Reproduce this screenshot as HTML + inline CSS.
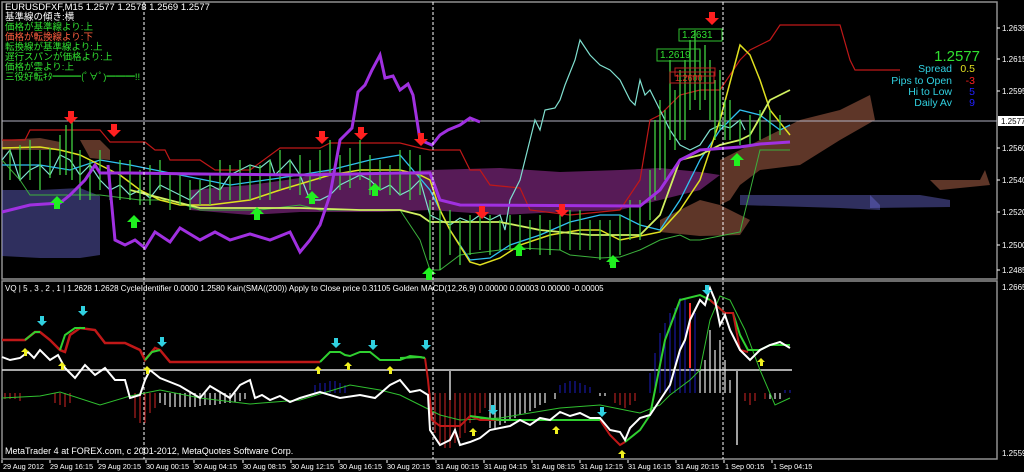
<!DOCTYPE html>
<html><head><meta charset="utf-8"><style>
html,body{margin:0;padding:0;background:#000;width:1024px;height:472px;overflow:hidden}
svg{display:block}
text{font-family:"Liberation Sans","Noto Sans CJK JP",sans-serif}
</style></head><body>
<svg width="1024" height="472" viewBox="0 0 1024 472" xmlns="http://www.w3.org/2000/svg">
<rect width="1024" height="472" fill="#000"/>
<rect x="2" y="2" width="995" height="277" fill="none" stroke="#909090" stroke-width="1.5"/>
<rect x="2" y="281" width="995" height="178" fill="none" stroke="#909090" stroke-width="1.5"/>
<g fill-opacity="0.42">
<path d="M2,190 L40,190 L80,188 L100,196 L100,255 L80,258 L40,258 L2,256 Z" fill="#7070e0"/>
<path d="M2,140 L40,138 L60,142 L60,150 L2,150 Z" fill="#e08060"/>
<path d="M80,140 L100,140 L110,150 L110,160 L90,158 Z" fill="#e08060"/>
<path d="M430,170 L500,168 L560,172 L620,170 L660,168 L700,172 L720,175 L700,190 L660,200 L620,210 L560,212 L500,215 L430,210 Z" fill="#d040d0"/>
<path d="M190,190 L250,185 L300,178 L330,170 L350,175 L400,172 L430,170 L430,210 L380,212 L300,212 L250,215 L190,210 Z" fill="#d040d0"/>
<path d="M720,160 L760,140 L800,120 L840,110 L870,95 L875,120 L840,140 L800,165 L760,170 L740,185 L730,200 L720,205 Z" fill="#e08060"/>
<path d="M700,200 L720,205 L750,220 L740,235 L700,236 L660,232 L660,220 Z" fill="#e08060"/>
<path d="M740,195 L870,195 L880,205 L880,210 L840,208 L740,205 Z" fill="#7070e0"/>
<path d="M870,195 L920,195 L950,200 L950,207 L870,208 Z" fill="#7070e0"/>
<path d="M930,180 L980,180 L985,170 L990,185 L940,190 Z" fill="#e08060"/>
</g>
<line x1="2" y1="121" x2="997" y2="121" stroke="#b0b0c0" stroke-width="1"/>
<polyline points="2,140 25,140 30,130 100,130 110,142 145,142 155,150 165,150 170,160 200,160 215,170 250,170 280,148 320,148 330,143 400,143 420,148 430,150 460,150 470,170 480,170 490,185 520,188 530,210 570,215 600,212 620,210 640,180 650,120 660,115 680,95 700,90 720,90 740,60 750,50 770,40 780,25 840,25 850,60 855,70 900,70" fill="none" stroke="#c01818" stroke-width="1.2"/>
<polyline points="2,160 20,180 30,195 100,195 140,200 170,200 200,210 260,210 300,205 320,210 400,210 420,240 430,270 440,270 460,255 500,250 520,248 560,250 570,255 600,258 620,257 640,250 660,240 680,235 690,240 700,240 720,236 740,232 760,150 790,150" fill="none" stroke="#3cb03c" stroke-width="1"/>
<polyline points="2,160 10,150 20,180 30,170 40,165 50,175 60,155 70,160 80,175 90,165 100,180 110,190 120,185 130,195 140,190 150,198 160,185 170,190 180,195 190,200 200,190 210,185 220,190 230,175 240,170 250,165 260,168 270,160 275,175 280,170 290,160 300,175 310,200 320,200 330,195 340,185 350,180 360,175 370,180 380,190 390,185 400,195 410,190 420,180 430,215 440,220 450,225 460,218 470,222 480,215 490,220 500,215 505,230 510,200 520,180 530,140 535,120 540,130 545,110 555,108 560,100 565,85 575,60 580,40 590,55 600,65 610,70 620,80 630,100 635,105 640,80 645,95 650,90 660,110 670,130 680,145 690,150 700,145 710,130 720,125 730,128 740,120 745,130" fill="none" stroke="#80e0d0" stroke-width="1.2"/>
<polyline points="2,165 40,165 70,170 100,160 130,165 180,175 230,185 280,178 330,170 370,160 400,155 430,190 450,230 470,260 490,258 510,245 540,235 570,222 600,215 620,215 640,225 660,230 680,200 700,160 720,130 740,110 760,115 780,130 790,125" fill="none" stroke="#30c0f0" stroke-width="1.3"/>
<polyline points="2,148 40,147 60,150 80,155 100,165 120,175 140,190 160,200 180,205 210,205 250,200 280,190 330,175 360,170 400,170 420,175 430,180 440,210 450,230 470,262 480,265 500,258 520,245 550,235 580,230 600,230 620,240 640,236 660,232 680,210 700,180 720,120 740,45 750,55 760,80 770,110 790,135" fill="none" stroke="#e0e020" stroke-width="1.5"/>
<polyline points="130,190 200,208 300,208 360,210 400,210 420,215 430,222 500,222 540,230 560,232 590,235 640,235 660,215 680,160 700,155 720,145 740,140 750,135 770,100 790,90" fill="none" stroke="#d0f060" stroke-width="1.8"/>
<g stroke="#40d040" stroke-width="1.3">
<path d="M10,150v30M20,145v35M30,140v40M40,150v40M50,148v30M60,135v40M66,125v50M72,120v60M80,150v50M90,160v40M100,150v40M110,170v30M120,160v40M130,160v40M140,170v35M150,165v40M160,160v30M170,175v35M180,175v30M190,180v30M200,180v25M210,175v30M220,160v40M230,165v35M240,160v40M250,165v35M260,165v35M270,160v40M280,150v40M290,160v30M300,155v40M310,160v30M320,150v30M330,140v35M340,155v35M350,148v40M360,140v40M370,155v40M380,160v30M390,165v30M400,150v45M410,150v50M420,155v40M430,200v60M440,210v60M450,210v45M460,220v45M470,215v40M480,215v35M490,215v40M500,220v30M510,215v35M520,215v35M530,220v30M540,215v40M550,220v35M560,215v35M570,210v40M580,210v40M590,220v30M600,220v40M610,220v45M620,215v40M630,200v40M640,200v40M650,170v50M655,120v80M660,100v70M665,110v70M670,60v80M675,90v60M680,70v70M685,60v80M690,40v70M695,30v70M700,50v60M705,45v55M710,60v60M715,80v60M720,70v60M725,100v40M730,100v40M740,120v25M750,115v30M760,110v30M770,110v30M780,115v20"/>
</g>
<polyline points="2,212 30,205 60,203 70,195 85,180 95,165 100,173 130,173 200,174 300,175 400,173 430,173 440,200 460,205 640,206 660,190 680,160 700,150 740,147 760,144 790,142" fill="none" stroke="#a030e0" stroke-width="3"/>
<polyline points="108,165 115,240 125,245 135,240 145,248 155,232 170,242 180,228 200,240 215,232 230,240 250,234 270,240 290,232 300,252 310,240 320,225 330,195 340,140 345,135 352,128 358,92 365,85 372,70 380,55 385,78 393,76 400,90 408,84 413,95 420,140 432,145 440,135 448,130 460,125 470,118 480,122" fill="none" stroke="#a030e0" stroke-width="3"/>
<g font-size="10" fill="#30e030">
<rect x="657" y="49" width="43" height="12" fill="none" stroke="#30c030"/><text x="660" y="58">1.2619</text>
<rect x="679" y="29" width="43" height="12" fill="none" stroke="#30c030"/><text x="682" y="38">1.2631</text>
</g>
<rect x="670" y="72" width="44" height="11" fill="none" stroke="#c02020"/><rect x="675" y="68" width="40" height="8" fill="none" stroke="#c02020"/>
<text x="675" y="81" font-size="9" fill="#e03020">1.2600</text>
<g fill="#ff2020">
<path d="M68,117h6v-6h-6zM64,117l7,7 7,-7z"/><path d="M111,130h6v-6h-6zM107,130l7,7 7,-7z"/>
<path d="M319,137h6v-6h-6zM315,137l7,7 7,-7z"/><path d="M358,133h6v-6h-6zM354,133l7,7 7,-7z"/>
<path d="M418,139h6v-6h-6zM414,139l7,7 7,-7z"/><path d="M479,212h6v-6h-6zM475,212l7,7 7,-7z"/>
<path d="M559,210h6v-6h-6zM555,210l7,7 7,-7z"/><path d="M709,18h6v-6h-6zM705,18l7,7 7,-7z"/>
</g>
<g fill="#20f020">
<path d="M54,203h6v6h-6zM50,203l7,-7 7,7z"/><path d="M131,222h6v6h-6zM127,222l7,-7 7,7z"/>
<path d="M254,214h6v6h-6zM250,214l7,-7 7,7z"/><path d="M309,198h6v6h-6zM305,198l7,-7 7,7z"/>
<path d="M372,190h6v6h-6zM368,190l7,-7 7,7z"/><path d="M426,274h6v6h-6zM422,274l7,-7 7,7z"/>
<path d="M516,250h6v6h-6zM512,250l7,-7 7,7z"/><path d="M610,262h6v6h-6zM606,262l7,-7 7,7z"/>
<path d="M734,160h6v6h-6zM730,160l7,-7 7,7z"/>
</g>
<g stroke="#fff" stroke-width="1" stroke-dasharray="3,2">
<line x1="144" y1="2" x2="144" y2="459"/><line x1="433" y1="2" x2="433" y2="459"/><line x1="723" y1="2" x2="723" y2="459"/>
</g>
<g font-size="9.5">
<text x="5" y="10" fill="#fff">EURUSDFXF,M15  1.2577 1.2578 1.2569 1.2577</text>
<text x="5" y="20" fill="#fff">基準線の傾き:横</text>
<text x="5" y="30" fill="#30e030">価格が基準線より:上</text>
<text x="5" y="40" fill="#ff6040">価格が転換線より:下</text>
<text x="5" y="50" fill="#30e030">転換線が基準線より:上</text>
<text x="5" y="60" fill="#30e030">遅行スパンが価格より:上</text>
<text x="5" y="70" fill="#30e030">価格が雲より:上</text>
<text x="5" y="80" fill="#30e030">三役好転ｷﾀ━━━(ﾟ∀ﾟ)━━━!!</text>
</g>
<text x="980" y="61" font-size="15" fill="#30e030" text-anchor="end">1.2577</text>
<g font-size="10.5" text-anchor="end">
<text x="952" y="72" fill="#30d0e0">Spread</text><text x="975" y="72" fill="#e0e020">0.5</text>
<text x="952" y="84" fill="#30d0e0">Pips to Open</text><text x="975" y="84" fill="#ff2020">-3</text>
<text x="952" y="95" fill="#30d0e0">Hi to Low</text><text x="975" y="95" fill="#2020ff">5</text>
<text x="952" y="106" fill="#30d0e0">Daily Av</text><text x="975" y="106" fill="#2020ff">9</text>
</g>
<g font-size="8" fill="#fff">
<text x="1002" y="31">1.2635</text><text x="1002" y="62">1.2615</text><text x="1002" y="94">1.2595</text>
<rect x="998" y="116" width="26" height="10" fill="#fff"/><text x="1001" y="124" fill="#000">1.2577</text>
<text x="1002" y="151">1.2560</text><text x="1002" y="183">1.2540</text><text x="1002" y="215">1.2520</text>
<text x="1002" y="248">1.2500</text><text x="1002" y="273">1.2485</text>
<text x="1002" y="290">1.2665</text><text x="1002" y="456">1.2559</text>
</g>
<g stroke="#fff"><path d="M997,28h3M997,59h3M997,91h3M997,148h3M997,180h3M997,212h3M997,245h3M997,270h3"/></g>
<text x="5" y="291" font-size="8" fill="#fff">VQ | 5 , 3 , 2 , 1 | 1.2628 1.2628  CycleIdentifier 0.0000 1.2580  Kain(SMA((200)) Apply to Close price 0.31105  Golden MACD(12,26,9) 0.00000 0.00003 0.00000 -0.00005</text>
<line x1="2" y1="370" x2="792" y2="370" stroke="#e0e0e0" stroke-width="1.5"/>
<g stroke-width="1.2">
<path d="M5,393v6M10,393v6M15,393v6M20,393v8M55,393v10M60,393v12M65,393v14M70,393v10M135,393v25M140,393v30M145,393v30M150,393v20M155,393v15M430,393v30M435,393v40M440,393v50M445,393v55M450,393v55M455,393v50M460,393v45M465,393v40M470,393v30M475,393v25M480,393v20M485,393v15M615,393v10M620,393v12M625,393v15M630,393v12M635,393v8M745,393v8M750,393v12M755,393v8M765,393v6" stroke="#b02020"/>
<path d="M160,393v10M165,393v12M170,393v14M175,393v14M180,393v14M185,393v14M190,393v14M195,393v14M200,393v13M205,393v12M210,393v12M215,393v12M220,393v11M225,393v10M230,393v10M235,393v9M240,393v8M245,393v6M490,393v35M495,393v35M500,393v32M505,393v30M510,393v28M515,393v25M520,393v22M525,393v20M530,393v18M535,393v15M540,393v12M545,393v10M555,393v6M600,393v3M605,393v3M700,370v23M705,360v33M710,330v63M715,350v43M720,340v53M725,360v33M730,380v13M770,393v6M775,393v6M780,393v6" stroke="#e8e8e8"/>
<path d="M315,393v-8M320,393v-10M325,393v-10M330,393v-12M335,393v-12M340,393v-10M345,393v-8M560,393v-8M565,393v-10M570,393v-12M575,393v-12M580,393v-10M585,393v-8M590,393v-6M650,393v-20M655,393v-40M660,393v-60M665,393v-70M670,393v-80M675,393v-85M680,393v-95M685,393v-95M690,393v-90M695,393v-80M785,393v-3M790,393v-3" stroke="#1818a0"/>
<path d="M690,303v65" stroke="#ff3030" stroke-width="2"/>
<path d="M450,370v30M737,370v75" stroke="#a0a0a0" stroke-width="2"/>
</g>
<polyline points="2,398 40,396 60,392 100,405 130,396 160,390 200,398 250,404 300,400 350,385 380,390 400,395 420,405 440,415 460,420 500,418 560,408 600,405 640,413 660,405 670,395 690,380 700,370 710,320 720,296 730,300 745,330 760,370 775,405 790,398" fill="none" stroke="#30c030" stroke-width="1"/>
<polyline points="2,340 25,340 35,332 40,332 50,340 60,350 65,352 70,335 80,328 95,330 105,343 125,343 140,350 145,360 155,348 160,350 170,362 320,362" fill="none" stroke="#c01818" stroke-width="2.5"/>
<polyline points="25,340 35,332 40,332" fill="none" stroke="#30d030" stroke-width="2"/>
<polyline points="60,350 65,335 75,328 85,328" fill="none" stroke="#30d030" stroke-width="2"/>
<polyline points="145,360 152,352 160,350" fill="none" stroke="#30d030" stroke-width="2"/>
<polyline points="320,362 330,352 340,352 345,355 350,356 360,352 370,352 380,360 400,360 410,356 420,357 425,358" fill="none" stroke="#30d030" stroke-width="2"/>
<polyline points="425,358 428,380 432,420 440,426 460,426 470,416 480,420 500,420 520,420 540,420 560,420 580,420 600,420 610,435 620,445 625,442" fill="none" stroke="#c01818" stroke-width="2"/>
<polyline points="400,358 420,357 425,358" fill="none" stroke="#30d030" stroke-width="2"/>
<polyline points="470,416 500,420 600,420" fill="none" stroke="#30d030" stroke-width="2"/>
<polyline points="625,442 640,430 650,415 655,390 665,340 680,300 700,295 710,300 725,313 733,313 740,335 748,350 760,350 770,345 790,345" fill="none" stroke="#30d030" stroke-width="2"/>
<polyline points="710,300 725,313 733,313 740,350 748,352" fill="none" stroke="#c01818" stroke-width="2"/>
<polyline points="2,357 10,360 20,358 28,352 34,358 40,350 50,360 58,355 65,368 75,378 85,365 95,375 105,368 115,380 125,380 130,398 140,395 145,380 150,370 160,378 170,382 180,386 190,392 200,398 210,386 220,392 230,398 240,385 250,380 255,398 262,395 270,400 280,396 290,402 300,398 320,392 340,398 360,395 375,398 390,385 400,380 410,392 420,390 428,395 430,430 440,445 450,440 455,430 460,445 470,442 480,438 490,430 500,428 510,426 520,420 530,425 540,418 550,420 560,412 570,416 580,413 590,418 600,418 610,430 620,432 625,440 630,428 640,418 650,415 660,400 670,385 680,350 685,340 690,320 695,310 700,300 705,305 710,288 715,300 720,325 725,315 730,330 735,340 740,350 750,360 760,350 770,345 780,342 790,348" fill="none" stroke="#fff" stroke-width="2"/>
<g fill="#30d0e0">
<path d="M40,321h4v-5h-4zM37,321l5,5 5,-5z"/><path d="M81,311h4v-5h-4zM78,311l5,5 5,-5z"/>
<path d="M160,342h4v-5h-4zM157,342l5,5 5,-5z"/><path d="M334,343h4v-5h-4zM331,343l5,5 5,-5z"/>
<path d="M371,345h4v-5h-4zM368,345l5,5 5,-5z"/><path d="M424,345h4v-5h-4zM421,345l5,5 5,-5z"/>
<path d="M491,410h4v-5h-4zM488,410l5,5 5,-5z"/><path d="M600,412h4v-5h-4zM597,412l5,5 5,-5z"/>
<path d="M705,290h4v-5h-4zM702,290l5,5 5,-5z"/>
</g>
<g fill="#f0f020">
<path d="M24,352h3v4h-3zM21,352l4,-4 4,4z"/><path d="M61,366h3v4h-3zM58,366l4,-4 4,4z"/>
<path d="M146,370h3v4h-3zM143,370l4,-4 4,4z"/><path d="M317,370h3v4h-3zM314,370l4,-4 4,4z"/>
<path d="M347,366h3v4h-3zM344,366l4,-4 4,4z"/><path d="M389,370h3v4h-3zM386,370l4,-4 4,4z"/>
<path d="M472,432h3v4h-3zM469,432l4,-4 4,4z"/><path d="M555,430h3v4h-3zM552,430l4,-4 4,4z"/>
<path d="M621,454h3v4h-3zM618,454l4,-4 4,4z"/><path d="M760,362h3v4h-3zM757,362l4,-4 4,4z"/>
</g>
<text x="5" y="454" font-size="9" fill="#fff">MetaTrader 4 at FOREX.com, c 2001-2012, MetaQuotes Software Corp.</text>
<g font-size="7.3" fill="#fff">
<text x="3" y="469">29 Aug 2012</text><text x="50" y="469">29 Aug 16:15</text><text x="98" y="469">29 Aug 20:15</text>
<text x="146" y="469">30 Aug 00:15</text><text x="194" y="469">30 Aug 04:15</text><text x="243" y="469">30 Aug 08:15</text>
<text x="291" y="469">30 Aug 12:15</text><text x="339" y="469">30 Aug 16:15</text><text x="387" y="469">30 Aug 20:15</text>
<text x="436" y="469">31 Aug 00:15</text><text x="484" y="469">31 Aug 04:15</text><text x="532" y="469">31 Aug 08:15</text>
<text x="580" y="469">31 Aug 12:15</text><text x="628" y="469">31 Aug 16:15</text><text x="676" y="469">31 Aug 20:15</text>
<text x="725" y="469">1 Sep 00:15</text><text x="773" y="469">1 Sep 04:15</text>
</g>
<g stroke="#fff"><path d="M2,460v3M50,460v3M98,460v3M146,460v3M194,460v3M243,460v3M291,460v3M339,460v3M387,460v3M436,460v3M484,460v3M532,460v3M580,460v3M628,460v3M676,460v3M724,460v3M772,460v3"/></g>
</svg>
</body></html>
